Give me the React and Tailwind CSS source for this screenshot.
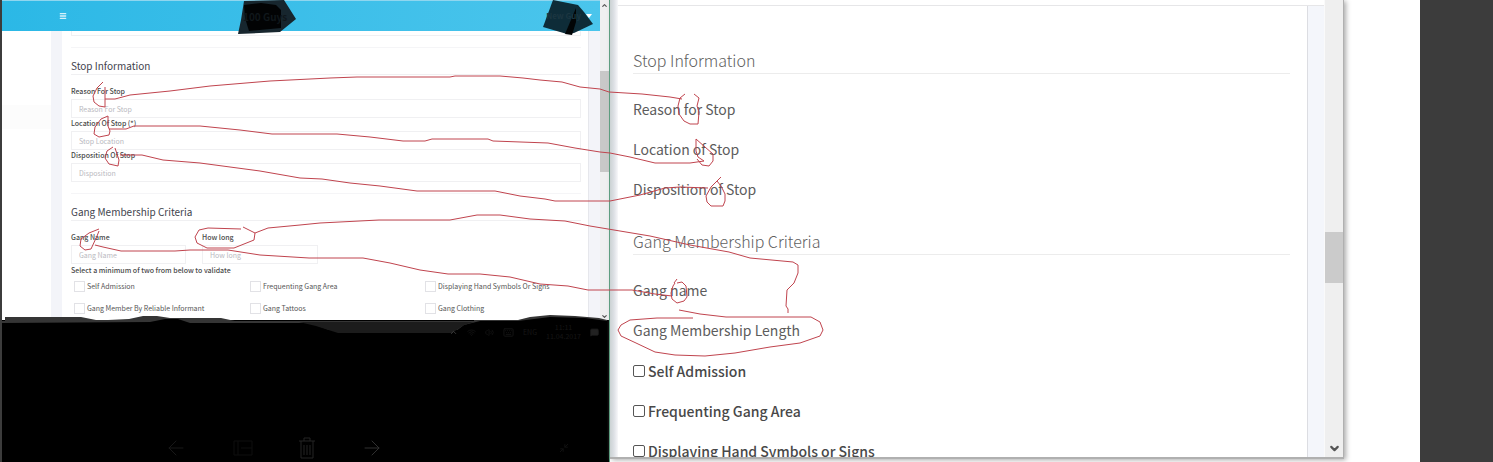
import { ChevronUp, ChevronDown, Menu, Trash2, ArrowLeft, ArrowRight, MessageSquare, Minimize2, Volume2, Keyboard, Wifi } from "lucide-react";

const stopFields = [
  { id: "reason", label: "Reason For Stop", placeholder: "Reason For Stop" },
  { id: "location", label: "Location Of Stop (*)", placeholder: "Stop Location" },
  { id: "disposition", label: "Disposition Of Stop", placeholder: "Disposition" },
];

const gangFields = [
  { id: "gang", label: "Gang Name", placeholder: "Gang Name" },
  { id: "long", label: "How long", placeholder: "How long" },
];

const criteria = [
  "Self Admission",
  "Frequenting Gang Area",
  "Displaying Hand Symbols Or Signs",
  "Gang Member By Reliable Informant",
  "Gang Tattoos",
  "Gang Clothing",
];

function SmallField({ id, label, placeholder }) {
  return (
    <div>
      <label htmlFor={id} className="block h-[13px] text-[7px] leading-[11px] font-medium text-[#4a4a4a]">
        {label}
      </label>
      <input
        id={id}
        placeholder={placeholder}
        className="block h-[19px] w-full border border-[#f0f0f2] bg-white px-[7px] text-[7px] text-[#666] outline-none placeholder:text-[#b9b9c0]"
      />
    </div>
  );
}

function SmallHeading({ children }) {
  return (
    <h2 className="h-[17px] border-b border-[#f0f0f2] text-[10px] leading-[16px] text-[#3f434d]">{children}</h2>
  );
}

function EditWindow() {
  return (
    <section className="flex min-w-0 flex-col overflow-hidden border-r border-[#4f9a78] border-l-2 border-l-[#3c3c3c] bg-white">
      <div className="flex h-[320px] shrink-0">
        <div className="flex min-w-0 flex-1 flex-col">
          <header className="flex h-[31px] shrink-0 items-center border-t border-[#8fd6ef] bg-linear-to-r from-[#2bb8e6] to-[#4ac5ec] pr-2 pl-[57px] text-[10px] font-bold">
            <button aria-label="Menu" className="text-white/80">
              <Menu size={8} strokeWidth={4} />
            </button>
            <span className="z-10 ml-44 text-[#10171b]">100 Guys</span>
            <button className="z-10 ml-auto flex items-center gap-[5px] text-[8px] text-[#1c3641]">
              New Guy
              <svg viewBox="0 0 6 4" className="h-1 w-1.5 fill-white">
                <path d="M0 0h6L3 4z" />
              </svg>
            </button>
          </header>
          <div className="flex min-h-0 flex-1">
            <aside className="w-[49px] shrink-0 pt-[74px]">
              <div className="h-6 bg-[#fcfcfc]" />
            </aside>
            <div className="flex min-w-0 flex-1 bg-[#f3f4f9] px-[11px]">
              <main className="min-w-0 flex-1 border-r border-[#e6e7ec] bg-white pr-[7px] pl-[9px]">
                <div className="h-[5px] border border-t-0 border-[#f0f0f2]" />
                <div className="mt-[11px] mb-[10px] border-b border-[#f5f5f7]" />
                <SmallHeading>Stop Information</SmallHeading>
                <div className="mt-[11px]">
                  {stopFields.map((f) => (
                    <SmallField key={f.id} {...f} />
                  ))}
                </div>
                <div className="mt-[11px] mb-[10px] border-b border-[#f5f5f7]" />
                <SmallHeading>Gang Membership Criteria</SmallHeading>
                <div className="mt-[11px] grid grid-cols-[115fr_116fr_247fr] gap-x-4">
                  {gangFields.map((f) => (
                    <SmallField key={f.id} {...f} />
                  ))}
                </div>
                <p className="h-[17px] text-[7px] leading-[12px] font-medium text-[#4a4a4a]">
                  Select a minimum of two from below to validate
                </p>
                <div className="grid grid-cols-[176fr_175fr_156fr] gap-y-[11px] pl-[3px]">
                  {criteria.map((c) => (
                    <label key={c} className="flex h-[11px] min-w-0 items-center gap-[2px] text-[7px] whitespace-nowrap text-[#555]">
                      <input type="checkbox" className="size-[11px] shrink-0 appearance-none border border-[#e2e2e6]" />
                      {c}
                    </label>
                  ))}
                </div>
              </main>
            </div>
          </div>
        </div>
        <div className="flex w-[9px] shrink-0 flex-col items-center bg-[#efeff0] text-[#555]">
          <ChevronUp size={7} strokeWidth={4} className="mt-0.5" />
          <div className="mt-[62px] h-[101px] w-full bg-[#c8c8c8]" />
          <ChevronDown size={7} strokeWidth={4} className="mt-auto" />
        </div>
      </div>
      <footer className="flex min-h-0 flex-1 flex-col justify-between bg-black">
        <div className="z-10 flex h-6 items-center justify-end gap-[9px] pr-2.5 text-[#161616]">
          <ChevronUp size={9} className="text-[#4a4a4a]" />
          <Wifi size={9} />
          <Volume2 size={9} />
          <Keyboard size={11} />
          <span className="text-[7px]">ENG</span>
          <div className="text-center text-[7px] leading-[9px]">
            <div>11:11</div>
            <div>11.04.2017</div>
          </div>
          <MessageSquare size={9} fill="currentColor" className="text-[#222]" />
        </div>
        <div className="z-10 grid h-7 grid-cols-[1fr_auto_1fr] items-center text-[#181818]">
          <div />
          <div className="mr-16 flex items-center gap-11">
            <ArrowLeft size={24} strokeWidth={1} />
            <svg viewBox="0 0 22 20" className="h-5 w-[22px] fill-none stroke-[#0e0e0e]">
              <path d="M2 3h18v14H2zM6 3v14M9 10h11" />
            </svg>
            <svg viewBox="0 0 18 22" className="h-[22px] w-[18px] fill-none stroke-[#252525]">
              <path d="M1 4h16M6 4V1h6v3M3 4v17h12V4M6 8v10M9 8v10M12 8v10" />
            </svg>
            <ArrowRight size={24} strokeWidth={1} className="text-[#303030]" />
          </div>
          <Minimize2 size={10} className="mr-10 justify-self-end text-[#151515]" />
        </div>
      </footer>
    </section>
  );
}

function BigHeading({ children }) {
  return (
    <h2 className="h-[25px] border-b border-[#ececec] text-[16px] leading-[23px] font-light text-[#606060]">{children}</h2>
  );
}

function ViewWindow() {
  return (
    <section className="mb-[3px] flex min-w-0 overflow-hidden border-r border-b-2 border-[#b0b0b0] bg-white shadow-[2px_1px_5px_#aaa]">
      <div className="w-2 shrink-0 bg-linear-to-r from-[#cbd2d3] via-[#dde0e5] to-[#f8f8fa]" />
      <div className="flex min-w-0 flex-1 border-r border-[#fafafa] pt-[5px]">
        <div className="flex min-w-0 flex-1 border-t border-[#e6e6e8]">
          <main className="min-w-0 flex-1 overflow-hidden border-r border-[#dcdde2] pt-[43px] pr-[17px] pl-[15px] text-[#5c5c5c]">
            <BigHeading>Stop Information</BigHeading>
            <div className="mt-[15px] text-[14px] leading-10">
              <p>Reason for Stop</p>
              <p>Location of Stop</p>
              <p>Disposition of Stop</p>
            </div>
            <div className="mt-[21px]">
              <BigHeading>Gang Membership Criteria</BigHeading>
            </div>
            <div className="mt-[15px] text-[14px] leading-10">
              <p>Gang name</p>
              <p>Gang Membership Length</p>
            </div>
            <div className="mt-px text-[14px] leading-10">
              {["Self Admission", "Frequenting Gang Area", "Displaying Hand Symbols or Signs"].map((c) => (
                <label key={c} className="flex items-center gap-[3px] font-medium text-[#484848]">
                  <input type="checkbox" className="size-3 shrink-0 appearance-none rounded-xs border border-[#555]" />
                  {c}
                </label>
              ))}
            </div>
          </main>
          <div className="w-4 shrink-0 bg-[#f4f6fb]" />
        </div>
      </div>
      <div className="flex w-[18px] shrink-0 flex-col items-center bg-[#efefef] text-[#555]">
        <div className="mt-[232px] h-[51px] w-full bg-[#cbcbcb]" />
        <ChevronDown size={13} strokeWidth={4} className="mt-auto mb-0.5" />
      </div>
    </section>
  );
}

function Annotations() {
  return (
    <svg viewBox="0 0 1493 462" preserveAspectRatio="none" className="pointer-events-none absolute inset-0 h-full w-full">
      <path fill="#353535" d="M5 317L81 317 96 320 108 320 129 319 143 316 157 316 170 318 221 318 235 321 474 321 474 320 518 320 530 317 550 315 575 316 599 318 607 320V330H2V321H5z" />
      <path fill="#000" d="M2 323L150 322 165 319 178 319 190 323 310 323 340 334 452 334 464 325 480 321 518 321 550 317 585 318 607 321V462H2z" />
      <path fill="#1c1c1c" d="M299 322H474L464 325 452 333H338L316 326z" />
      <g>
        <path fill="#17262e" d="M244 1L284 0 296 19 280 32 238 34 241 20z" />
        <path fill="#020304" d="M244 5L261 3 276 5 281 10 281 28 249 31 245 18z" />
        <path fill="#0e2c38" d="M553 0L578 5 584 12 593 24 574 33 567 34 543 27z" />
        <path fill="#020506" d="M576 8L576 22 572 35 565 34z" />
      </g>
      <g fill="none" stroke="#c0444e" strokeWidth="1" strokeLinejoin="round">
        <path d="M103 82L97 88 93 96 94 102 99 106 105 107V87M105 99H115L130 95 170 91 210 86 270 81 330 78 357 77H450L455 76H500L523 78 540 80 562 82 580 87 600 89 609 92 642 94 670 97 682 99" />
        <path d="M108 116L101 119 95 127 94 134 99 137 109 135 110 131 108 126V116M109 129H126L134 126H200L240 130 272 134H337L370 137 403 141H425L432 139H488L493 141 548 143 575 148 600 152 610 153 630 157 655 163H690L704 161" />
        <path d="M113 147L107 151 105 158 109 164 118 166 119 160 115 148 M120 155H142L163 160 200 163 260 171 300 178 322 179 350 183 380 186 417 191H495L520 196 545 199 555 201H610L640 195 665 188 680 187 708 188" />
        <path d="M99 229L89 233 81 239 80 246 85 250 91 249 97 236 99 231M95 245L103 247 121 251H175L190 250H228L260 255 309 258H363L390 263 420 270 448 274H480L510 277 540 284 568 286 588 290H632L655 294 672 296" />
        <path d="M241 229L208 228 199 230 195 237 197 243 207 248H234L244 244 254 240 255 233 243 227M255 233L268 228 300 225 320 223 379 220H450L477 215H500L530 219 565 221 590 226 620 231 650 236 690 245 729 252 750 258 793 262 798 265 798 273 794 283 787 290 786 306 788 309 788 313" />
        <path d="M685 94L680 98 678 106 679 114 684 121 690 124H698L699 112 697 106 699 98 694 94" />
        <path d="M704 161L698 157 696 151V139L705 147 713 154 713 161 709 166 702 165 697 159" />
        <path d="M721 177L711 187 706 196 707 202 711 206H723L725 201V194L721 186 717 181" />
        <path d="M677 279L674 283M677 283L682 282 686 286 687 297 684 301 677 303 672 299 671 293 673 286 675 283" />
        <path d="M679 310L700 314 726 317H811L820 322 823 330 820 336 800 343 770 347 735 353 705 356 675 355 655 352 636 343 621 336 618 330 621 325 630 320 657 318H693" />
      </g>
    </svg>
  );
}

export default function App() {
  return (
    <div className="relative grid h-screen grid-cols-[610fr_734fr_76fr_73fr] overflow-hidden bg-white font-['Noto_Sans_CJK_SC','Source_Sans_Pro',sans-serif]">
      <EditWindow />
      <ViewWindow />
      <div />
      <div className="bg-[#3c3c3c]" />
      <Annotations />
    </div>
  );
}
